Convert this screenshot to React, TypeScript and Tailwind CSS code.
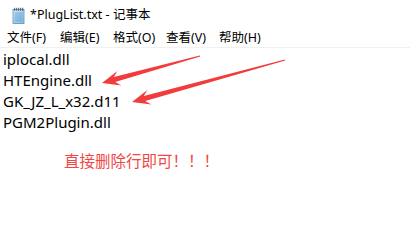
import React from "react";

type Pt = [number, number];

// tapered arrow polygon, thin at tail, wide head at tip
function arrowPoints(tip: Pt, tail: Pt, headLen = 18, headHalf = 7.5, neckHalf = 2.6, tailHalf = 0.6): string {
  const dx = tail[0] - tip[0];
  const dy = tail[1] - tip[1];
  const len = Math.hypot(dx, dy);
  const u: Pt = [dx / len, dy / len];
  const n: Pt = [-u[1], u[0]];
  const at = (d: number, w: number): Pt => [tip[0] + u[0] * d + n[0] * w, tip[1] + u[1] * d + n[1] * w];
  const neck = headLen * 0.72;
  const pts: Pt[] = [
    tip,
    at(headLen, headHalf),
    at(neck, neckHalf),
    at(len, tailHalf),
    at(len, -tailHalf),
    at(neck, -neckHalf),
    at(headLen, -headHalf),
  ];
  return pts.map((p) => `${p[0].toFixed(1)},${p[1].toFixed(1)}`).join(" ");
}

const NotepadIcon: React.FC = () => (
  <svg width="13" height="17" viewBox="0 0 13 17">
    <defs>
      <linearGradient id="pad" x1="0" y1="0" x2="1" y2="1">
        <stop offset="0" stopColor="#d8eefa" />
        <stop offset="1" stopColor="#7fbfe4" />
      </linearGradient>
    </defs>
    <rect x="1" y="2.5" width="11" height="14" fill="url(#pad)" stroke="#5a8fb5" strokeWidth="0.8" />
    {[0, 1, 2, 3, 4].map((i) => (
      <rect key={i} x={2.2 + i * 2} y="0.8" width="1" height="3" fill="#555" />
    ))}
    {[6, 8, 10, 12, 14].map((y) => (
      <line key={y} x1="2.5" y1={y} x2="10.5" y2={y} stroke="#4a90c4" strokeWidth="0.7" />
    ))}
  </svg>
);

const menus = ["文件(F)", "编辑(E)", "格式(O)", "查看(V)", "帮助(H)"];
const lines = ["iplocal.dll", "HTEngine.dll", "GK_JZ_L_x32.d11", "PGM2Plugin.dll"];

export default function App() {
  return (
    <div className="relative w-[410px] h-[240px] bg-white overflow-hidden font-['Noto_Sans','Noto_Sans_CJK_SC',sans-serif] text-black">
      <div className="h-[30px] flex items-center pl-[12px] gap-[5px]">
        <NotepadIcon />
        <span className="text-[12.5px] leading-none">*PlugList.txt - 记事本</span>
      </div>

      <div className="h-[18px] flex items-center pl-[7px] gap-[15px] border-b border-[#f0f0f0] text-[12.5px] leading-none">
        {menus.map((m) => (
          <span key={m} className="w-[38px] whitespace-nowrap">{m}</span>
        ))}
      </div>

      <div className="pl-[3px] pt-[1px] text-[15px] leading-[21px]">
        {lines.map((l) => (
          <div key={l}>{l}</div>
        ))}
      </div>

      <div className="pl-[64px] pt-[20px] text-[15.5px] leading-none text-[#f24545] font-['Noto_Sans_CJK_SC',sans-serif]">
        直接删除行即可！！！
      </div>

      <svg className="absolute left-0 top-0" width="410" height="240" viewBox="0 0 410 240">
        <polygon points={arrowPoints([102, 83], [200, 56])} fill="#f23c3c" />
        <polygon points={arrowPoints([132, 102], [285, 60])} fill="#f23c3c" />
      </svg>
    </div>
  );
}
